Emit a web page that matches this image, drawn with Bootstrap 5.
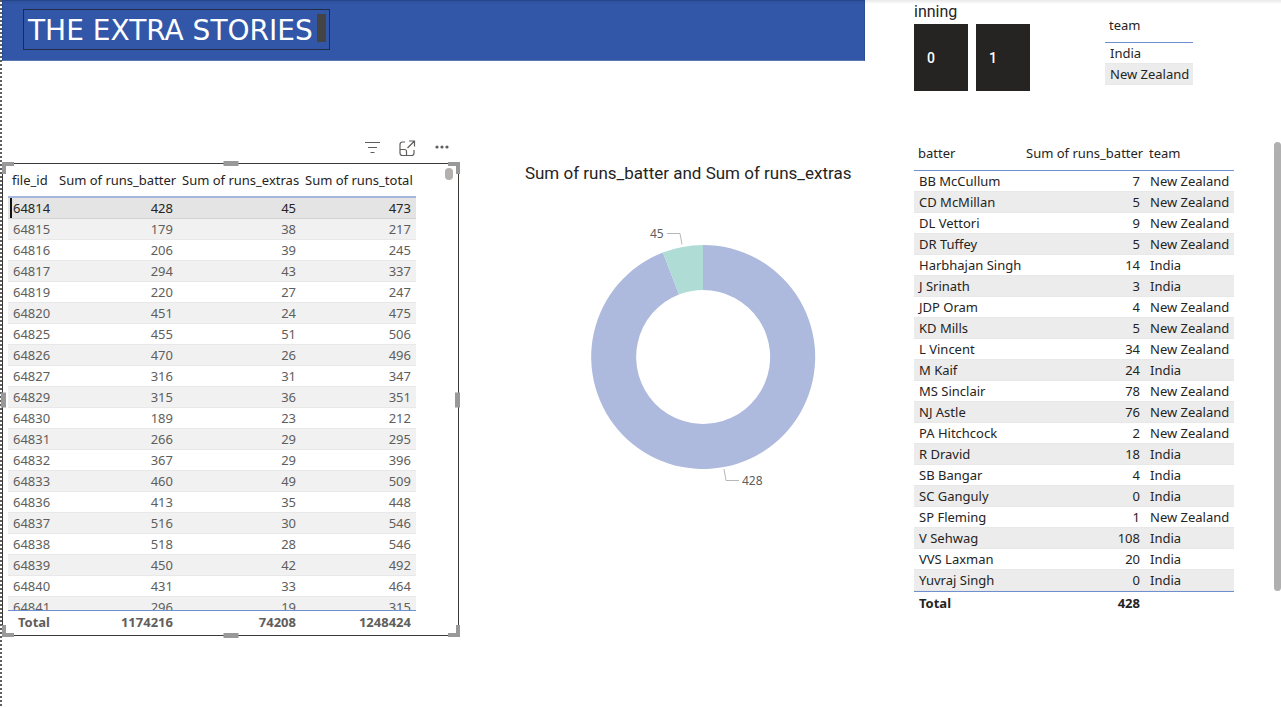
<!DOCTYPE html>
<html lang="en">
<head>
<meta charset="utf-8">
<meta name="viewport" content="width=device-width, initial-scale=1">
<title>The Extra Stories</title>
<link href="https://cdn.jsdelivr.net/npm/bootstrap@5.3.0/dist/css/bootstrap.min.css" rel="stylesheet">
<style>
body{font-family:"Noto Sans","Open Sans",sans-serif;font-size:13px;line-height:20px;color:#252423;background:#fff}
.report{display:grid;grid-template-columns:863fr 416fr;min-height:100vh;padding-left:2px;
  background:repeating-linear-gradient(#606060 0 2px,#fff 2px 4px) left/2px 100% no-repeat}
.topshade{height:4px;background:linear-gradient(rgba(0,0,0,.09),rgba(0,0,0,0));pointer-events:none}
.banner{background:#3257a8;height:61px;border:1px solid #2a4d98;border-bottom-color:#5c76b0;padding:8px 20px}
.banner h1{font:28px/42px "DejaVu Sans",sans-serif;color:#fff;border:1px solid #222b45;padding:0 3px 0 4px;height:41px}
.caret{width:9px;height:28px;background:#444}
.tools{width:53%;height:30px;padding-right:7px}
.tools button{color:#605e5c;width:19px;height:19px}
.panel{flex:0 0 53%;border:1px solid #3b3a39;height:473px}
.grip{position:absolute;background:#999;width:15px;height:5px}
.grip.side{width:5px;height:15px}
.corner{position:absolute;width:12px;height:12px;border:0 solid #999}
.corner.tl{left:-1px;top:-2px;border-width:4px 0 0 4px}
.corner.tr{right:-2px;top:-2px;border-width:4px 4px 0 0}
.corner.bl{left:-1px;bottom:-2px;border-width:0 0 4px 4px}
.corner.br{right:-2px;bottom:-2px;border-width:0 4px 4px 0}
.grip.t{top:-3px}
.grip.b{bottom:-3px}
.grip.l{left:-2px}
.grip.r{right:-2px}
.grid-table{table-layout:fixed;border-collapse:separate;border-spacing:0;white-space:nowrap}
.grid-table th{font-weight:400;height:35px;padding:0 5px 0 4px;vertical-align:middle;border-bottom:1px solid #6f8fce}
.grid-table td{height:21px;padding:0 5px;line-height:20px;border-bottom:1px solid #e8e8e8}
.grid-table tbody tr:nth-child(even) td{background:#ececec}
.grid-table tfoot td{font-weight:700;border-top:1px solid #6f8fce;border-bottom:0;height:22px}
.files{width:408px;margin-left:5px;color:#605e5c}
.files,.files tbody{display:block}
.files tbody{height:412px;overflow:hidden}
.files tr{display:table;table-layout:fixed;width:100%;border-spacing:0}
.files tr>:nth-child(1){width:47px}
.files tr>:nth-child(2),.files tr>:nth-child(3){width:123px}
.files th{color:#252423;height:34px;border-bottom:2px solid #a6b5dc}
.files tbody tr:nth-child(even) td{background:#f1f1f1}
.files tbody tr:first-child td{background:#e4e4e4;color:#252423;border-bottom-color:#d2d2d2}
.files tbody tr:first-child td:first-child{box-shadow:inset 2px 0 #e4e4e4,inset 4px 0 #111}
.thumb{position:absolute;right:5px;top:4px;width:8px;height:12px;border-radius:4px;background:#b3b0ad}
.din{font-family:Roboto,sans-serif;font-size:17px;line-height:20px;font-weight:400}
.chart text{font-size:12px;fill:#605e5c}
.side-col{padding-left:49px}
.slicers{height:136px}
.inning{padding-top:2px}
.inning .din{font-size:16px}
.tile{width:54px;height:67px;background:#252423;color:#fff;font:500 14px Roboto,sans-serif;border:0;padding:0 0 0 13px;text-align:left}
.tiles{padding-top:2px}
.teams{width:88px;margin:8px 0 0 3px}
.batters{width:320px}
.scrollbar{width:7px;height:449px;border-radius:4px;background:#b0b0b0;margin-top:6px}
</style>
</head>
<body>
<div class="topshade position-fixed top-0 start-0 w-100"></div>
<main class="report">
  <section>
    <header class="banner d-flex align-items-start">
      <h1 class="m-0 d-flex align-items-start gap-1"><span>THE EXTRA STORIES</span><span class="caret mt-1"></span></h1>
    </header>
    <div class="mt-5 pt-4">
      <div class="tools d-flex justify-content-end align-items-center gap-3">
        <button class="btn p-0 border-0 d-flex" aria-label="Filters"><svg width="18" height="18" fill="none" stroke="currentColor"><path d="M2 3.500h15M5 8.500h9M7.500 13.500h4"/></svg></button>
        <button class="btn p-0 border-0 d-flex" aria-label="Focus mode"><svg width="18" height="18" fill="none" stroke="currentColor" stroke-width="1.200"><path d="M7 3H4.500Q2 3 2 5.500V14Q2 16.500 4.500 16.500H13.500Q16 16.500 16 14v-3M2 10.500h4.500q2 0 2 2v4M9.500 9l7-7M11 2h5.500v5.500"/></svg></button>
        <button class="btn p-0 border-0 d-flex" aria-label="More options"><svg width="18" height="18" fill="currentColor"><circle cx="4" cy="8" r="1.600"/><circle cx="9" cy="8" r="1.600"/><circle cx="14" cy="8" r="1.600"/></svg></button>
      </div>
      <div class="d-flex align-items-start">
        <div class="panel position-relative">
          <span class="corner tl"></span><span class="corner tr"></span>
          <span class="corner bl"></span><span class="corner br"></span>
          <span class="grip t start-50 translate-middle-x"></span>
          <span class="grip b start-50 translate-middle-x"></span>
          <span class="grip side l top-50 translate-middle-y"></span>
          <span class="grip side r top-50 translate-middle-y"></span>
          <span class="thumb"></span>
          <table class="grid-table files text-end">
            <thead><tr><th class="text-start">file_id</th><th>Sum of runs_batter</th><th>Sum of runs_extras</th><th>Sum of runs_total</th></tr></thead>
            <tbody>
              <tr><td>64814</td><td>428</td><td>45</td><td>473</td></tr>
              <tr><td>64815</td><td>179</td><td>38</td><td>217</td></tr>
              <tr><td>64816</td><td>206</td><td>39</td><td>245</td></tr>
              <tr><td>64817</td><td>294</td><td>43</td><td>337</td></tr>
              <tr><td>64819</td><td>220</td><td>27</td><td>247</td></tr>
              <tr><td>64820</td><td>451</td><td>24</td><td>475</td></tr>
              <tr><td>64825</td><td>455</td><td>51</td><td>506</td></tr>
              <tr><td>64826</td><td>470</td><td>26</td><td>496</td></tr>
              <tr><td>64827</td><td>316</td><td>31</td><td>347</td></tr>
              <tr><td>64829</td><td>315</td><td>36</td><td>351</td></tr>
              <tr><td>64830</td><td>189</td><td>23</td><td>212</td></tr>
              <tr><td>64831</td><td>266</td><td>29</td><td>295</td></tr>
              <tr><td>64832</td><td>367</td><td>29</td><td>396</td></tr>
              <tr><td>64833</td><td>460</td><td>49</td><td>509</td></tr>
              <tr><td>64836</td><td>413</td><td>35</td><td>448</td></tr>
              <tr><td>64837</td><td>516</td><td>30</td><td>546</td></tr>
              <tr><td>64838</td><td>518</td><td>28</td><td>546</td></tr>
              <tr><td>64839</td><td>450</td><td>42</td><td>492</td></tr>
              <tr><td>64840</td><td>431</td><td>33</td><td>464</td></tr>
              <tr><td>64841</td><td>296</td><td>19</td><td>315</td></tr>
            </tbody>
            <tfoot><tr><td>Total</td><td>1174216</td><td>74208</td><td>1248424</td></tr></tfoot>
          </table>
        </div>
        <div class="flex-fill text-center chart ps-5 ms-1">
          <h2 class="din m-0">Sum of runs_batter and Sum of runs_extras</h2>
          <svg class="mw-100" width="350" height="300" viewBox="515 183 350 300" overflow="visible" role="img" aria-label="Donut chart of batter runs and extras">
            <path fill="#adb9dd" d="M705 245A112 112 0 1 1 664.900 252.500L681 294.500A67 67 0 1 0 705 290Z"/>
            <path fill="#b0dcd6" d="M664.900 252.500A112 112 0 0 1 705 245V290A67 67 0 0 0 681 294.500Z"/>
            <path fill="none" stroke="#b8b8b8" d="M669 233.500h13l2 11M726 469l2 11.500h13"/>
            <text x="652" y="238">45</text><text x="744" y="485">428</text>
          </svg>
        </div>
      </div>
    </div>
  </section>
  <aside class="side-col">
    <div class="slicers d-flex">
      <div class="inning">
        <h2 class="din m-0">inning</h2>
        <div class="tiles d-flex gap-2"><button class="tile">0</button><button class="tile">1</button></div>
      </div>
      <div class="ps-5 ms-4">
        <table class="grid-table teams">
          <thead><tr><th>team</th></tr></thead>
          <tbody><tr><td>India</td></tr><tr><td>New Zealand</td></tr></tbody>
        </table>
      </div>
    </div>
    <div class="d-flex justify-content-between align-items-start">
      <table class="grid-table batters">
        <colgroup><col style="width:108px"><col style="width:123px"><col style="width:89px"></colgroup>
        <thead><tr><th>batter</th><th class="text-end">Sum of runs_batter</th><th class="ps-1">team</th></tr></thead>
        <tbody>
          <tr><td>BB McCullum</td><td class="text-end">7</td><td>New Zealand</td></tr>
          <tr><td>CD McMillan</td><td class="text-end">5</td><td>New Zealand</td></tr>
          <tr><td>DL Vettori</td><td class="text-end">9</td><td>New Zealand</td></tr>
          <tr><td>DR Tuffey</td><td class="text-end">5</td><td>New Zealand</td></tr>
          <tr><td>Harbhajan Singh</td><td class="text-end">14</td><td>India</td></tr>
          <tr><td>J Srinath</td><td class="text-end">3</td><td>India</td></tr>
          <tr><td>JDP Oram</td><td class="text-end">4</td><td>New Zealand</td></tr>
          <tr><td>KD Mills</td><td class="text-end">5</td><td>New Zealand</td></tr>
          <tr><td>L Vincent</td><td class="text-end">34</td><td>New Zealand</td></tr>
          <tr><td>M Kaif</td><td class="text-end">24</td><td>India</td></tr>
          <tr><td>MS Sinclair</td><td class="text-end">78</td><td>New Zealand</td></tr>
          <tr><td>NJ Astle</td><td class="text-end">76</td><td>New Zealand</td></tr>
          <tr><td>PA Hitchcock</td><td class="text-end">2</td><td>New Zealand</td></tr>
          <tr><td>R Dravid</td><td class="text-end">18</td><td>India</td></tr>
          <tr><td>SB Bangar</td><td class="text-end">4</td><td>India</td></tr>
          <tr><td>SC Ganguly</td><td class="text-end">0</td><td>India</td></tr>
          <tr><td>SP Fleming</td><td class="text-end">1</td><td>New Zealand</td></tr>
          <tr><td>V Sehwag</td><td class="text-end">108</td><td>India</td></tr>
          <tr><td>VVS Laxman</td><td class="text-end">20</td><td>India</td></tr>
          <tr><td>Yuvraj Singh</td><td class="text-end">0</td><td>India</td></tr>
        </tbody>
        <tfoot><tr><td>Total</td><td class="text-end">428</td><td></td></tr></tfoot>
      </table>
      <div class="scrollbar"></div>
    </div>
  </aside>
</main>
<script src="https://cdn.jsdelivr.net/npm/bootstrap@5.3.0/dist/js/bootstrap.bundle.min.js"></script>
</body>
</html>
